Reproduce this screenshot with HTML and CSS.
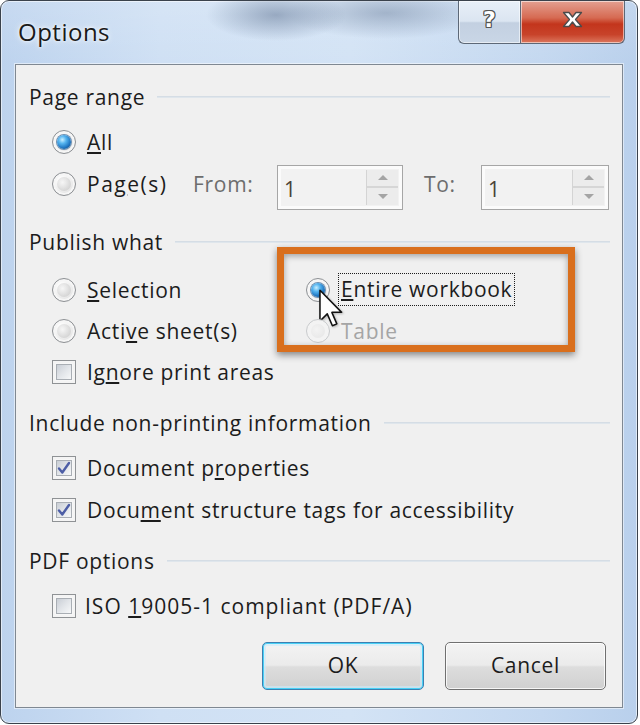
FILE: index.html
```html
<!DOCTYPE html>
<html>
<head>
<meta charset="utf-8">
<title>Options</title>
<link rel="stylesheet" href="styles.css">
</head>
<body>
<div class="window">
  <div class="titlebar">
    <span class="title">Options</span>
    <div class="caption">
      <div class="cbtn help"><span>?</span></div>
      <div class="cbtn close">
        <svg width="21" height="17" viewBox="0 0 21 17"><path d="M1.5 1.5 H7 L10.5 6 L14 1.5 H19.5 L13.5 8.5 L19.5 15.5 H14 L10.5 11 L7 15.5 H1.5 L7.5 8.5 Z" fill="#fff" stroke="#4b4b4b" stroke-width="1.3" stroke-linejoin="round"/></svg>
      </div>
    </div>
  </div>

  <div class="client">
    <div class="legend"><span>Page range</span><i></i></div>
    <div class="rows first">
      <div class="opt"><span class="radio on"></span><span class="lbl"><u>A</u>ll</span></div>
      <div class="opt pages">
        <div class="pagecell"><span class="radio"></span><span class="lbl">Pa<u>g</u>e(s)</span></div>
        <span class="dim from">From:</span>
        <span class="spin w1"><span class="val">1</span><span class="arrows"><b class="up"></b><b class="down"></b></span></span>
        <span class="dim to">To:</span>
        <span class="spin w2"><span class="val">1</span><span class="arrows"><b class="up"></b><b class="down"></b></span></span>
      </div>
    </div>

    <div class="legend g2"><span>Publish what</span><i></i></div>
    <div class="grid2">
      <div class="opt"><span class="radio"></span><span class="lbl"><u>S</u>election</span></div>
      <div class="opt entire"><span class="radio on"></span><span class="lbl focus"><u>E</u>ntire workbook</span>
        <svg class="cursor" width="24" height="39" viewBox="0 0 12.5 20"><path d="M0.5 0.5 V16.5 L4.3 12.8 L7 19 L9.3 18 L6.7 12 H11.8 Z" fill="#fff" stroke="#111" stroke-width="0.8" stroke-linejoin="round"/></svg>
      </div>
      <div class="opt"><span class="radio"></span><span class="lbl">Acti<u>v</u>e sheet(s)</span></div>
      <div class="opt disabled"><span class="radio off"></span><span class="lbl">Table</span></div>
      <div class="opt"><span class="check"></span><span class="lbl">Ig<u>n</u>ore print areas</span></div>
    </div>

    <div class="legend g3"><span>Include non-printing information</span><i></i></div>
    <div class="rows">
      <div class="opt"><span class="check on"><svg width="16" height="16" viewBox="0 0 16 16"><path d="M3 8.5 L6.3 12.5 L13 3" fill="none" stroke="#4d5ea6" stroke-width="2.4" stroke-linecap="round" stroke-linejoin="round"/></svg></span><span class="lbl">Document p<u>r</u>operties</span></div>
      <div class="opt"><span class="check on"><svg width="16" height="16" viewBox="0 0 16 16"><path d="M3 8.5 L6.3 12.5 L13 3" fill="none" stroke="#4d5ea6" stroke-width="2.4" stroke-linecap="round" stroke-linejoin="round"/></svg></span><span class="lbl">Docu<u>m</u>ent structure tags for accessibility</span></div>
    </div>

    <div class="legend g4"><span>PDF options</span><i></i></div>
    <div class="rows">
      <div class="opt"><span class="check"></span><span class="lbl iso">ISO <u>1</u>9005-1 compliant (PDF/A)</span></div>
    </div>

    <div class="buttons">
      <div class="btn default">OK</div>
      <div class="btn">Cancel</div>
    </div>

    <div class="highlight"></div>
  </div>
</div>
</body>
</html>
```

FILE: styles.css
```css
* { box-sizing: border-box; margin: 0; padding: 0; }

html, body {
  width: 640px;
  height: 725px;
  overflow: hidden;
  background: #ffffff;
}

body {
  font-family: "Open Sans", "Noto Sans", sans-serif;
  font-size: 21px;
  letter-spacing: 0.7px;
  color: #1c1c1c;
}

u { text-decoration: underline; text-underline-offset: 2px; text-decoration-thickness: 1.5px; }

.window {
  width: 638px;
  height: 724px;
  border: 1px solid #3a424c;
  border-radius: 9px;
  background:
    linear-gradient(90deg, #bdd3ee 0%, #cfe0f4 25%, #d3e3f5 55%, #c4d8f0 85%, #b9d0ec 100%);
  padding: 0 14px 15px 14px;
  display: flex;
  flex-direction: column;
  box-shadow: inset 0 0 0 1px rgba(255,255,255,0.55);
}

/* ---------- title bar ---------- */
.titlebar {
  height: 63px;
  margin: 0 -14px;
  padding-left: 17px;
  display: flex;
  align-items: flex-start;
  justify-content: space-between;
  background:
    radial-gradient(ellipse 70px 26px at 275px 14px, rgba(100,120,150,0.55), rgba(100,120,150,0) 100%),
    radial-gradient(ellipse 100px 26px at 385px 12px, rgba(100,120,150,0.45), rgba(100,120,150,0) 100%),
    linear-gradient(180deg, rgba(255,255,255,0.15), rgba(255,255,255,0));
}

.title {
  margin-top: 16px;
  font-size: 24px;
  letter-spacing: 0.5px;
  line-height: 30px;
  color: #1a1a1a;
  text-shadow: 0 0 6px rgba(255,255,255,0.9), 0 0 3px rgba(255,255,255,0.9);
}

.caption {
  display: flex;
  margin-right: 12px;
  height: 43px;
}

.cbtn {
  height: 43px;
  border: 1px solid #5d6877;
  border-top: none;
  display: flex;
  align-items: center;
  justify-content: center;
  box-shadow: inset 0 0 0 1px rgba(255,255,255,0.55);
}

.help {
  width: 62px;
  border-radius: 0 0 0 6px;
  border-right: none;
  background: linear-gradient(180deg, #e8eff8 0%, #dbe5f1 48%, #c3d0e1 52%, #c9d6e6 100%);
}

.help span {
  font-family: "DejaVu Sans", sans-serif;
  font-weight: bold;
  font-size: 22px;
  letter-spacing: 0;
  line-height: 22px;
  color: #ffffff;
  margin-top: -4px;
  text-shadow:
    -1px 0 0 #555, 1px 0 0 #555, 0 -1px 0 #555, 0 1px 0 #555,
    -1px -1px 0 #555, 1px 1px 0 #555, -1px 1px 0 #555, 1px -1px 0 #555;
}

.close {
  width: 105px;
  border-radius: 0 0 6px 0;
  background: linear-gradient(180deg, #e4a091 0%, #d66a52 40%, #c3351c 55%, #c8432a 80%, #dc785f 100%);
}

.close svg { margin-top: -5px; }

/* ---------- client area ---------- */
.client {
  position: relative;
  flex: 1;
  background: #f0f0f0;
  border: 1px solid #7f8892;
  box-shadow: 0 0 0 1px rgba(255,255,255,0.5);
  padding: 18px 12px 0 13px;
  display: flex;
  flex-direction: column;
}

.legend {
  height: 28px;
  display: flex;
  align-items: center;
  line-height: 28px;
  color: #1c1c1c;
  white-space: nowrap;
}

.legend i {
  flex: 1;
  height: 2px;
  margin-left: 12px;
  background: #dfe6ec;
  border-top: 1px solid #d5dde5;
}

.legend.g2 { margin-top: 23px; }
.legend.g3 { margin-top: 17px; }
.legend.g4 { margin-top: 16px; }

.rows {
  margin-top: 10px;
  padding-left: 23px;
  display: flex;
  flex-direction: column;
}

.opt {
  height: 42px;
  display: flex;
  align-items: center;
  position: relative;
}

.lbl { margin-left: 11px; white-space: nowrap; }

.grid2 {
  margin-top: 13px;
  padding-left: 23px;
  display: grid;
  grid-template-columns: 254px 1fr;
  grid-auto-rows: 41px;
}

.grid2 .opt { height: 41px; }

/* radio */
.radio {
  width: 24px;
  height: 24px;
  flex: none;
  border-radius: 50%;
  border: 1px solid #8d9094;
  background: radial-gradient(circle at 35% 30%, #ffffff 0%, #f0f0f0 45%, #d8d8d8 100%);
  position: relative;
  box-shadow: inset 0 0 0 2px #f6f6f6;
}

.radio::after {
  content: "";
  position: absolute;
  left: 4px; top: 4px;
  width: 14px; height: 14px;
  border-radius: 50%;
  background: radial-gradient(circle at 40% 40%, #f4f4f4 0%, #d2d2d2 60%, #bdbdbd 100%);
  opacity: 0.7;
}

.radio.on::after {
  opacity: 1;
  background: radial-gradient(circle at 38% 34%, #c9efff 0%, #55b4ef 30%, #1e74c0 65%, #103f6c 100%);
  box-shadow: 0 0 0 1px #6e8fb0;
}

.radio.off {
  border-color: #c9cbcd;
  background: #f3f3f3;
  box-shadow: none;
}
.radio.off::after { opacity: 0.25; }

/* checkbox */
.check {
  width: 24px;
  height: 24px;
  flex: none;
  border: 1px solid #8f9295;
  background: #f7f7f7;
  box-shadow: inset 0 0 0 2px #f4f4f4;
  position: relative;
  display: flex;
  align-items: center;
  justify-content: center;
}

.check::before {
  content: "";
  position: absolute;
  left: 3px; top: 3px; right: 3px; bottom: 3px;
  border: 1px solid #a9aeb4;
  background: linear-gradient(135deg, #c9ced5 0%, #e2e5e9 50%, #f7f8f9 100%);
}

.check svg { position: relative; }

.lbl.iso { margin-left: 9px; letter-spacing: 1px; }

/* page range row */
.pagecell {
  width: 141px;
  display: flex;
  align-items: center;
  flex: none;
}

.pagecell .lbl { letter-spacing: 1.5px; }

.dim { color: #6d6d6d; flex: none; white-space: nowrap; }
.from { width: 84px; }
.to { width: 57px; margin-left: 21px; }

.spin {
  height: 45px;
  margin-top: 6px;
  flex: none;
  border: 1px solid #a6a6a6;
  background: #f2f2f2;
  box-shadow: inset 0 0 0 3px #fbfbfb;
  display: flex;
  align-items: stretch;
  padding: 4px 4px 4px 6px;
}

.w1 { width: 126px; }
.w2 { width: 128px; }

.val {
  flex: 1;
  color: #4a4238;
  line-height: 35px;
  padding-top: 2px;
}

.arrows {
  width: 32px;
  display: flex;
  flex-direction: column;
  border-left: 1px solid #d4d4d4;
}

.arrows b {
  flex: 1;
  position: relative;
  background: #ececec;
}

.arrows b.up { border-bottom: 2px solid #d6d6d6; }

.arrows b::after {
  content: "";
  position: absolute;
  left: 50%;
  top: 50%;
  margin-left: -5px;
  border-left: 5px solid transparent;
  border-right: 5px solid transparent;
}

.arrows b.up::after { border-bottom: 5px solid #a4a4a4; margin-top: -3px; }
.arrows b.down::after { border-top: 5px solid #a4a4a4; margin-top: -2px; }

/* entire workbook */
.focus {
  margin-left: 8px;
  padding: 1px 2px;
  border: 1px dotted #1c1c1c;
  line-height: 29px;
}

.disabled .lbl { color: #a5a5a5; }

.cursor {
  position: absolute;
  left: 13px;
  top: 20px;
  filter: drop-shadow(1px 1px 1px rgba(0,0,0,0.25));
}

/* buttons */
.buttons {
  margin-top: 15px;
  padding-right: 4px;
  display: flex;
  justify-content: flex-end;
  gap: 21px;
}

.btn {
  width: 161px;
  height: 48px;
  border: 1px solid #707070;
  border-radius: 5px;
  background: linear-gradient(180deg, #f3f3f3 0%, #ebebeb 48%, #dddddd 52%, #d0d0d0 100%);
  box-shadow: inset 0 0 0 1px rgba(255,255,255,0.8);
  display: flex;
  align-items: center;
  justify-content: center;
  color: #1c1c1c;
  padding-bottom: 2px;
}

.btn.default {
  width: 162px;
  border-color: #3c7fb1;
  box-shadow: inset 0 0 0 1px #48d0f6, inset 0 0 0 3px rgba(200,235,252,0.6);
}

/* orange callout */
.highlight {
  position: absolute;
  left: 261px;
  top: 182px;
  width: 298px;
  height: 105px;
  border: 7px solid #d96f1d;
  box-shadow: 0 3px 7px rgba(0,0,0,0.45), inset 0 2px 6px rgba(0,0,0,0.35);
  pointer-events: none;
}
```
